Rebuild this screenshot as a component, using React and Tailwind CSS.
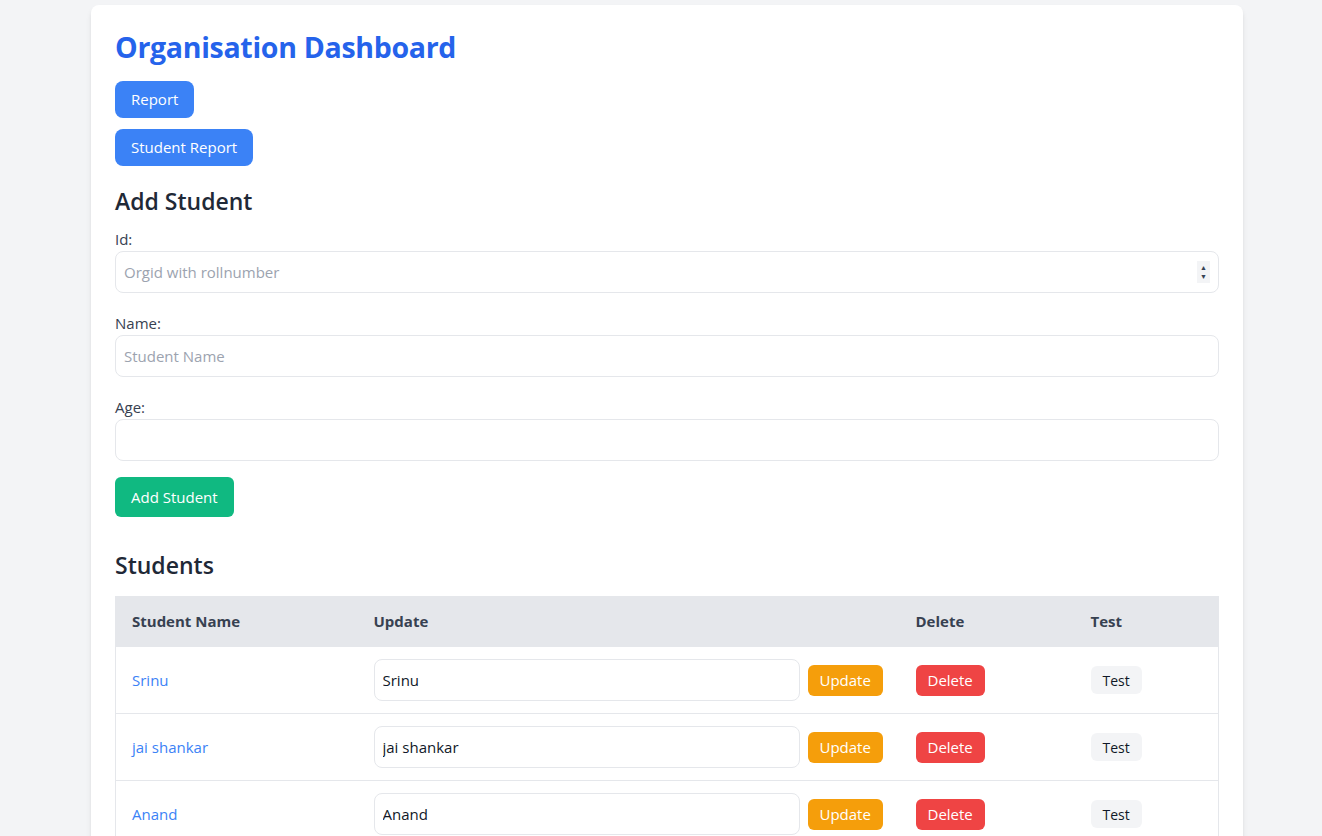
import React, { useState } from 'react';

const students = ['Srinu', 'jai shankar', 'Anand'];

export default function App() {
  const [names, setNames] = useState(students);

  return (
    <div className="min-h-screen bg-[#f3f4f6] pt-[5px]" style={{ fontFamily: '"Open Sans", sans-serif' }}>
      <div className="w-[1152px] ml-[91px] bg-white rounded-lg shadow-md px-6 pt-6 pb-6">
        <h1 className="text-[28.5px] font-bold text-[#2563eb] leading-9 mb-[16px] tracking-[-0.3px]">Organisation Dashboard</h1>
        <div className="flex flex-col items-start gap-[11px]">
          <button className="h-[37px] px-4 bg-[#3b82f6] text-white text-[15px] rounded-lg">Report</button>
          <button className="h-[37px] px-4 bg-[#3b82f6] text-white text-[15px] rounded-lg">Student Report</button>
        </div>

        <h2 className="text-[23px] font-semibold text-[#1f2937] leading-8 mt-[19px] mb-[12px]">Add Student</h2>
        <div className="text-[15px] text-[#374151]">
          <label className="block leading-5 mb-[2px]">Id:</label>
          <div className="relative">
            <input type="text" placeholder="Orgid with rollnumber" className="block w-full h-[42px] px-2 border border-[#e5e7eb] rounded-lg placeholder-[#9ca3af]" />
            <div className="absolute right-[9px] top-[10px] w-[13px] h-[22px] bg-[#f3f4f6] flex flex-col items-center justify-center text-[7px] leading-[9px] text-gray-700">
              <span>▲</span><span>▼</span>
            </div>
          </div>
          <label className="block leading-5 mt-[20px] mb-[2px]">Name:</label>
          <input type="text" placeholder="Student Name" className="block w-full h-[42px] px-2 border border-[#e5e7eb] rounded-lg placeholder-[#9ca3af]" />
          <label className="block leading-5 mt-[20px] mb-[2px]">Age:</label>
          <input type="text" className="block w-full h-[42px] px-2 border border-[#e5e7eb] rounded-lg" />
          <button className="mt-4 h-[40px] px-4 bg-[#10b981] text-white rounded-md">Add Student</button>
        </div>

        <h2 className="text-[23px] font-semibold text-[#1f2937] leading-8 mt-[32px] mb-[15px]">Students</h2>
        <table className="w-full text-[15px] border border-[#e5e7eb] border-collapse">
          <thead>
            <tr className="bg-[#e5e7eb] text-[#374151] text-left h-[50px]">
              <th className="pl-4 w-[242px] font-bold">Student Name</th>
              <th className="pl-4 w-[542px] font-bold">Update</th>
              <th className="pl-4 w-[175px] font-bold">Delete</th>
              <th className="pl-4 font-bold">Test</th>
            </tr>
          </thead>
          <tbody>
            {names.map((n, i) => (
              <tr key={i} className="border-t border-[#e5e7eb] h-[67px]">
                <td className="pl-4 text-[#3b82f6]">{students[i]}</td>
                <td className="pl-4">
                  <div className="flex items-center gap-2">
                    <input
                      value={n}
                      onChange={(e) => setNames(names.map((x, j) => (j === i ? e.target.value : x)))}
                      className="w-[426px] h-[42px] px-2 border border-[#e5e7eb] rounded-lg text-gray-900"
                    />
                    <button className="h-[31px] px-3 bg-[#f59e0b] text-white rounded-md">Update</button>
                  </div>
                </td>
                <td className="pl-4">
                  <button className="h-[31px] px-3 bg-[#ef4444] text-white rounded-md">Delete</button>
                </td>
                <td className="pl-4">
                  <button className="h-[28px] px-3 bg-[#f3f4f6] text-gray-900 rounded-md text-[14px]">Test</button>
                </td>
              </tr>
            ))}
          </tbody>
        </table>
      </div>
    </div>
  );
}
